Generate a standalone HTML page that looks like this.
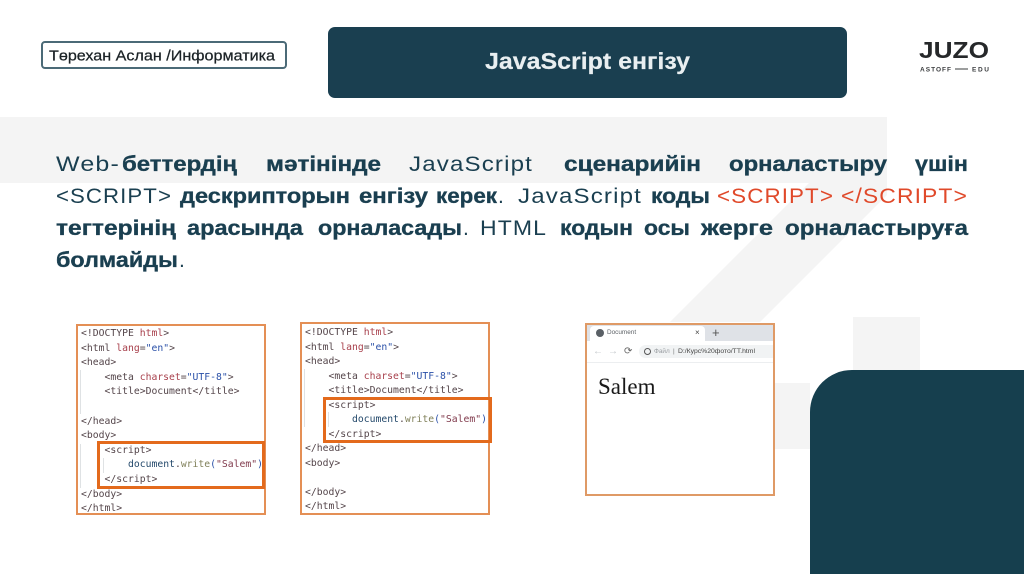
<!DOCTYPE html>
<html lang="kk">
<head>
<meta charset="utf-8">
<title>JavaScript енгізу</title>
<style>
html,body{margin:0;padding:0;width:1024px;height:574px;overflow:hidden;background:#fff}
body{position:relative;font-family:"Liberation Sans","DejaVu Sans",sans-serif}
.a{position:absolute}
.wm{background:#f4f4f4}
#label{left:41px;top:41px;width:242px;height:24px;border:2px solid #4b6a77;border-radius:4px;background:#fff}
#hdr{left:328px;top:27px;width:519px;height:71px;background:#1a3f50;border-radius:7px}
.t{font-family:"Liberation Sans",sans-serif;font-size:21px;fill:#1a3f50}
.n{letter-spacing:1px}
.b{font-weight:700;stroke:#1a3f50;stroke-width:.35px;letter-spacing:0}
.r{fill:#e0492a}
.box{position:absolute;box-sizing:border-box;border:2px solid #e48f55;background:#fff}
.code{position:absolute;margin:0;font-family:"DejaVu Sans Mono",monospace;font-size:9.75px;color:#54454a;filter:blur(.3px);white-space:pre}
.code i{font-style:normal;color:#a8404c}
.code u{text-decoration:none;color:#2a50a8}
.code s{text-decoration:none;color:#24496b}
.code em{font-style:normal;color:#80805a}
.code q{quotes:none;color:#803a4c}
.inner{position:absolute;box-sizing:border-box;border:3px solid #e36a1c}
.g{position:absolute;width:1px;background:#dfe2e4}
#dark{left:810px;top:370px;width:214px;height:204px;background:#163f4e;border-top-left-radius:42px}
</style>
</head>
<body>
<div class="a wm" style="left:0;top:117px;width:887px;height:66px"></div>
<svg class="a" style="left:0;top:0" width="1024" height="574"><polygon points="809,183 887,183 887,195 760,322 670,322" fill="#f4f4f4"/></svg>
<div class="a wm" style="left:853px;top:317px;width:67px;height:53px"></div>
<div class="a wm" style="left:740px;top:383px;width:70px;height:66px"></div>
<div class="a" id="dark"></div>

<div class="a" id="label"></div>
<div class="a" id="hdr"></div>

<svg class="a" style="left:0;top:0" width="1024" height="300">
<text x="49" y="60.5" font-size="15" fill="#1b2226" stroke="#1b2226" stroke-width=".25" textLength="226" lengthAdjust="spacingAndGlyphs">Төрехан Аслан /Информатика</text>
<text x="485" y="69" font-size="23" font-weight="700" fill="#e9eff1" stroke="#e9eff1" stroke-width=".2" textLength="205" lengthAdjust="spacingAndGlyphs">JavaScript енгізу</text>

<text x="919" y="58" font-size="23.5" font-weight="700" fill="#26282a" textLength="70" lengthAdjust="spacingAndGlyphs">JUZO</text>
<text x="920" y="71.5" font-size="6.5" font-weight="700" fill="#3a3c3e" textLength="31" lengthAdjust="spacing">ASTOFF</text>
<rect x="955" y="68.5" width="13" height="1" fill="#3a3c3e"/>
<text x="972" y="71.5" font-size="6.5" font-weight="700" fill="#3a3c3e" textLength="17" lengthAdjust="spacing">EDU</text>

<text class="t n" x="56" y="171" textLength="64" lengthAdjust="spacingAndGlyphs">Web-</text>
<text class="t b" x="122" y="171" textLength="115" lengthAdjust="spacingAndGlyphs">беттердің</text>
<text class="t b" x="266" y="171" textLength="115" lengthAdjust="spacingAndGlyphs">мәтінінде</text>
<text class="t n" x="409" y="171" textLength="124" lengthAdjust="spacingAndGlyphs">JavaScript</text>
<text class="t b" x="564" y="171" textLength="137" lengthAdjust="spacingAndGlyphs">сценарийін</text>
<text class="t b" x="729" y="171" textLength="158" lengthAdjust="spacingAndGlyphs">орналастыру</text>
<text class="t b" x="915" y="171" textLength="53" lengthAdjust="spacingAndGlyphs">үшін</text>

<text class="t n" x="56" y="203" textLength="116" lengthAdjust="spacingAndGlyphs">&lt;SCRIPT&gt;</text>
<text class="t b" x="180" y="203" textLength="170" lengthAdjust="spacingAndGlyphs">дескрипторын</text>
<text class="t b" x="359" y="203" textLength="69" lengthAdjust="spacingAndGlyphs">енгізу</text>
<text class="t b" x="436" y="203" textLength="61" lengthAdjust="spacingAndGlyphs">керек</text>
<text class="t" x="498" y="203">.</text>
<text class="t n" x="518" y="203" textLength="124" lengthAdjust="spacingAndGlyphs">JavaScript</text>
<text class="t b" x="651" y="203" textLength="59" lengthAdjust="spacingAndGlyphs">коды</text>
<text class="t n r" x="717" y="203" textLength="117" lengthAdjust="spacingAndGlyphs">&lt;SCRIPT&gt;</text>
<text class="t n r" x="841" y="203" textLength="127" lengthAdjust="spacingAndGlyphs">&lt;/SCRIPT&gt;</text>

<text class="t b" x="56" y="235" textLength="120" lengthAdjust="spacingAndGlyphs">тегтерінің</text>
<text class="t b" x="187" y="235" textLength="116" lengthAdjust="spacingAndGlyphs">арасында</text>
<text class="t b" x="318" y="235" textLength="144" lengthAdjust="spacingAndGlyphs">орналасады</text>
<text class="t" x="463" y="235">.</text>
<text class="t n" x="480" y="235" textLength="67" lengthAdjust="spacingAndGlyphs">HTML</text>
<text class="t b" x="560" y="235" textLength="73" lengthAdjust="spacingAndGlyphs">кодын</text>
<text class="t b" x="644" y="235" textLength="46" lengthAdjust="spacingAndGlyphs">осы</text>
<text class="t b" x="701" y="235" textLength="72" lengthAdjust="spacingAndGlyphs">жерге</text>
<text class="t b" x="785" y="235" textLength="183" lengthAdjust="spacingAndGlyphs">орналастыруға</text>

<text class="t b" x="56" y="267" textLength="122" lengthAdjust="spacingAndGlyphs">болмайды</text>
<text class="t" x="179" y="267">.</text>
</svg>

<div class="box" style="left:76px;top:324px;width:190px;height:191px"></div>
<div class="g" style="left:80px;top:370px;height:44px"></div>
<div class="g" style="left:80px;top:444px;height:44px"></div>
<div class="g" style="left:103px;top:458px;height:15px"></div>
<pre class="code" style="left:81px;top:327px;line-height:14.6px">&lt;!DOCTYPE <i>html</i>&gt;
&lt;html <i>lang</i>=<u>"en"</u>&gt;
&lt;head&gt;
    &lt;meta <i>charset</i>=<u>"UTF-8"</u>&gt;
    &lt;title&gt;Document&lt;/title&gt;

&lt;/head&gt;
&lt;body&gt;
    &lt;script&gt;
        <s>document</s>.<em>write</em><u>(</u><q>"Salem"</q><u>)</u>
    &lt;/script&gt;
&lt;/body&gt;
&lt;/html&gt;</pre>
<div class="inner" style="left:97px;top:441px;width:168px;height:48px"></div>

<div class="box" style="left:300px;top:322px;width:190px;height:193px"></div>
<div class="g" style="left:304px;top:369px;height:58px"></div>
<div class="g" style="left:328px;top:412px;height:15px"></div>
<pre class="code" style="left:305px;top:326px;line-height:14.5px">&lt;!DOCTYPE <i>html</i>&gt;
&lt;html <i>lang</i>=<u>"en"</u>&gt;
&lt;head&gt;
    &lt;meta <i>charset</i>=<u>"UTF-8"</u>&gt;
    &lt;title&gt;Document&lt;/title&gt;
    &lt;script&gt;
        <s>document</s>.<em>write</em><u>(</u><q>"Salem"</q><u>)</u>
    &lt;/script&gt;
&lt;/head&gt;
&lt;body&gt;

&lt;/body&gt;
&lt;/html&gt;</pre>
<div class="inner" style="left:323px;top:397px;width:169px;height:46px"></div>

<div class="box" style="left:585px;top:323px;width:190px;height:173px;border-color:#df9a66">
  <div class="a" style="left:0;top:0;width:186px;height:16px;background:#dfe2e7"></div>
  <div class="a" style="left:3px;top:1px;width:115px;height:16px;background:#fff;border-radius:4px 4px 0 0"></div>
  <div class="a" style="left:9px;top:4px;width:8px;height:8px;border-radius:50%;background:#5a6066"></div>
  <div class="a" style="left:20px;top:3px;font-size:6.4px;line-height:10px;color:#5f6469">Document</div>
  <div class="a" style="left:108px;top:3px;font-size:8px;line-height:10px;color:#444">×</div>
  <div class="a" style="left:125px;top:1px;font-size:13px;line-height:14px;color:#555">+</div>
  <div class="a" style="left:0;top:17px;width:186px;height:20px;background:#fff;border-bottom:1px solid #eceef0"></div>
  <div class="a" style="left:6px;top:20px;font-size:10px;line-height:14px;color:#c4c8cc">←</div>
  <div class="a" style="left:21px;top:20px;font-size:10px;line-height:14px;color:#c4c8cc">→</div>
  <div class="a" style="left:37px;top:20px;font-size:10px;line-height:14px;color:#666">⟳</div>
  <div class="a" style="left:52px;top:20px;width:134px;height:13px;background:#f1f3f4;border-radius:7px 0 0 7px"></div>
  <div class="a" style="left:57px;top:23px;width:5px;height:5px;border:1px solid #555;border-radius:50%"></div>
  <div class="a" style="left:67px;top:21px;font-size:6.4px;line-height:11px;color:#9a9ea2;white-space:nowrap">Файл</div>
  <div class="a" style="left:86px;top:21px;font-size:6.4px;line-height:11px;color:#777;white-space:nowrap">|</div>
  <div class="a" style="left:91px;top:21px;font-size:6.8px;line-height:11px;color:#444;white-space:nowrap">D:/Курс%20фото/TT.html</div>
  <div class="a" style="left:11px;top:49px;font-family:'Liberation Serif',serif;font-size:23px;line-height:26px;color:#1a1a1a">Salem</div>
</div>
</body>
</html>
